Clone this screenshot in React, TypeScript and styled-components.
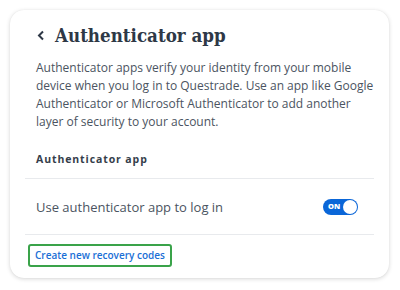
import React from "react";
import styled, { createGlobalStyle } from "styled-components";

const Global = createGlobalStyle`
  html, body { margin: 0; padding: 0; background: #ffffff; }
  body { font-family: "Open Sans", "Liberation Sans", sans-serif; }
`;

const Page = styled.div`
  width: 400px;
  height: 290px;
  padding: 10px 11px 12px 10px;
  box-sizing: border-box;
`;

const Card = styled.div`
  background: #fff;
  border-radius: 14px;
  box-shadow: 0 1px 4px rgba(0, 0, 0, 0.16), 0 0 1px rgba(0, 0, 0, 0.08);
  padding: 12px 15px 14px 15px;
  box-sizing: border-box;
  height: 268px;
`;

const Header = styled.div`
  display: flex;
  align-items: center;
  gap: 10px;
  padding-left: 12px;
  height: 26px;
`;

const Title = styled.h1`
  margin: 0;
  font-family: "DejaVu Serif Condensed", "DejaVu Serif", "Liberation Serif", serif;
  font-stretch: condensed;
  font-weight: 700;
  font-size: 18.6px;
  color: #2e3846;
`;

const Body = styled.p`
  margin: 11px 0 0 0;
  padding: 0 0 0 11px;
  font-size: 12px;
  line-height: 18px;
  color: #4b5461;
`;

const SectionLabel = styled.div`
  margin-top: 21px;
  padding: 0 11px 12px;
  font-size: 10.5px;
  font-weight: 700;
  letter-spacing: 0.9px;
  color: #353e4b;
  border-bottom: 1px solid #e8eaed;
`;

const Row = styled.div`
  display: flex;
  align-items: center;
  justify-content: space-between;
  height: 55px;
  padding: 0 16px 0 11px;
  border-bottom: 1px solid #e8eaed;
`;

const RowText = styled.span`
  font-size: 13px;
  color: #4b5461;
`;

const Toggle = styled.div`
  width: 35px;
  height: 16px;
  border-radius: 8px;
  background: #0a66d8;
  display: flex;
  align-items: center;
  justify-content: space-between;
  padding: 0 1px 0 5px;
  box-sizing: border-box;
`;

const ToggleLabel = styled.span`
  font-size: 7.5px;
  font-weight: 800;
  color: #fff;
  line-height: 1;
`;

const Knob = styled.span`
  width: 14px;
  height: 14px;
  border-radius: 50%;
  background: #fff;
`;

const LinkButton = styled.button`
  margin: 9px 0 0 3px;
  display: block;
  background: #fff;
  border: 2px solid #3aa34a;
  border-radius: 3px;
  padding: 2px 5px 3px;
  font-family: "Open Sans", "Liberation Sans", sans-serif;
  font-size: 10px;
  font-weight: 600;
  color: #1a6fd6;
  cursor: pointer;
`;

const Chevron = () => (
  <svg width="8" height="11" viewBox="0 0 8 11">
    <path d="M6 1.5 L2 5.5 L6 9.5" fill="none" stroke="#2e3846" strokeWidth="2" />
  </svg>
);

export default function App() {
  return (
    <>
      <Global />
      <Page>
        <Card>
          <Header>
            <Chevron />
            <Title>Authenticator app</Title>
          </Header>
          <Body>
            Authenticator apps verify your identity from your mobile device when you log in to
            Questrade. Use an app like Google Authenticator or Microsoft Authenticator to add
            another layer of security to your account.
          </Body>
          <SectionLabel>Authenticator app</SectionLabel>
          <Row>
            <RowText>Use authenticator app to log in</RowText>
            <Toggle>
              <ToggleLabel>ON</ToggleLabel>
              <Knob />
            </Toggle>
          </Row>
          <LinkButton>Create new recovery codes</LinkButton>
        </Card>
      </Page>
    </>
  );
}
